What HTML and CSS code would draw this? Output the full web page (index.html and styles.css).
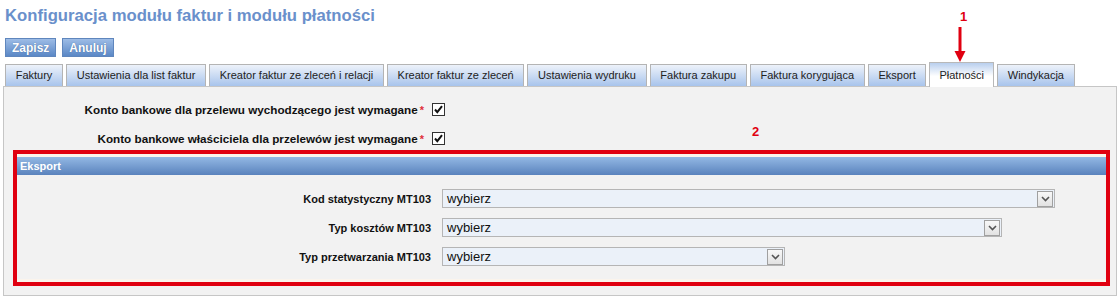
FILE: index.html
```html
<!DOCTYPE html>
<html>
    <head>
        <title>Konfiguracja modułu faktur i modułu płatności</title>
        <link rel="stylesheet" href="styles.css">
    </head>
    <body>
        <p class="title">Konfiguracja modułu faktur i modułu płatności</p>

        <div class="actions">
            <button class="action-button">Zapisz</button>
            <button class="action-button">Anuluj</button>
        </div>

        <div class="tabs">
            <div class="tab">Faktury</div>
            <div class="tab">Ustawienia dla list faktur</div>
            <div class="tab">Kreator faktur ze zleceń i relacji</div>
            <div class="tab">Kreator faktur ze zleceń</div>
            <div class="tab">Ustawienia wydruku</div>
            <div class="tab">Faktura zakupu</div>
            <div class="tab">Faktura korygująca</div>
            <div class="tab">Eksport</div>
            <div class="tab active">Płatności</div>
            <div class="tab">Windykacja</div>
        </div>

        <div class="panel">
            <div class="check-row">
                <span class="check-label">Konto bankowe dla przelewu wychodzącego jest wymagane<span class="req">*</span></span>
                <span class="checkbox">
                    <svg width="11" height="11" viewBox="0 0 11 11"><path d="M2 5.5 L4.3 8.2 L9 2.2" fill="none" stroke="#111" stroke-width="2"/></svg>
                </span>
            </div>
            <div class="check-row">
                <span class="check-label">Konto bankowe właściciela dla przelewów jest wymagane<span class="req">*</span></span>
                <span class="checkbox">
                    <svg width="11" height="11" viewBox="0 0 11 11"><path d="M2 5.5 L4.3 8.2 L9 2.2" fill="none" stroke="#111" stroke-width="2"/></svg>
                </span>
            </div>

            <div class="mark-box">
                <div class="section">
                    <div class="section-head">Eksport</div>
                    <div class="form-row">
                        <span class="form-label">Kod statystyczny MT103</span>
                        <div class="select wide">
                            <span>wybierz</span>
                            <span class="select-arrow"><svg width="9" height="6" viewBox="0 0 9 6"><path d="M1 1 L4.5 4.5 L8 1" fill="none" stroke="#555" stroke-width="1.6"/></svg></span>
                        </div>
                    </div>
                    <div class="form-row">
                        <span class="form-label">Typ kosztów MT103</span>
                        <div class="select medium">
                            <span>wybierz</span>
                            <span class="select-arrow"><svg width="9" height="6" viewBox="0 0 9 6"><path d="M1 1 L4.5 4.5 L8 1" fill="none" stroke="#555" stroke-width="1.6"/></svg></span>
                        </div>
                    </div>
                    <div class="form-row">
                        <span class="form-label">Typ przetwarzania MT103</span>
                        <div class="select narrow">
                            <span>wybierz</span>
                            <span class="select-arrow"><svg width="9" height="6" viewBox="0 0 9 6"><path d="M1 1 L4.5 4.5 L8 1" fill="none" stroke="#555" stroke-width="1.6"/></svg></span>
                        </div>
                    </div>
                </div>
            </div>
        </div>

        <div class="callout callout-1">
            <span class="callout-num">1</span>
            <svg class="callout-arrow" width="12" height="36" viewBox="0 0 12 36"><path d="M6 0 L6 26" stroke="#e00010" stroke-width="3"/><path d="M0.5 24 L6 35 L11.5 24 Z" fill="#e00010"/></svg>
        </div>
        <span class="callout-num callout-2">2</span>
    </body>
</html>
```

FILE: styles.css
```css
body{
    margin: 0;
    background-color: white;
    font-family: "Liberation Sans", Arial, sans-serif;
    color: #111;
    position: relative;
}
.title{
    margin: 6px 0 0 5px;
    font-size: 16.7px;
    font-weight: bold;
    color: #6a90cb;
    line-height: 20px;
}
.actions{
    display: flex;
    gap: 6px;
    margin: 12px 0 0 5px;
}
.action-button{
    height: 19px;
    padding: 0 6px;
    border: 1px solid #5f86bd;
    background: linear-gradient(#9dbce6, #5b88c6);
    color: white;
    font-family: "Liberation Sans", Arial, sans-serif;
    font-size: 12px;
    font-weight: bold;
    text-shadow: 0 0 1px #3a5f94;
}
.tabs{
    display: flex;
    align-items: flex-end;
    gap: 3px;
    margin: 5px 0 0 5px;
    height: 24px;
    position: relative;
    z-index: 1;
}
.tab{
    height: 21px;
    line-height: 21px;
    padding: 0 9.7px;
    border: 1px solid #b4b4b4;
    border-bottom: none;
    background: linear-gradient(#edf2fa, #a8c4ec);
    font-size: 11px;
    color: #222;
}
.tab.active{
    height: 24px;
    line-height: 24px;
    padding: 0 9px;
    background: linear-gradient(#b9cfee, #ffffff 55%);
    margin-bottom: -1px;
    border-color: #b8b8b8;
}
.panel{
    box-sizing: border-box;
    margin-left: 3px;
    height: 210px;
    border: 1px solid #c6c6c6;
    background-color: #f2f2f2;
    padding-top: 14px;
}
.check-row{
    display: flex;
    align-items: center;
    height: 16px;
    margin-bottom: 13px;
}
.check-label{
    width: 420px;
    text-align: right;
    font-size: 11.7px;
    font-weight: bold;
}
.req{
    color: #e0303a;
    margin-left: 2px;
    font-size: 11px;
}
.checkbox{
    margin-left: 8px;
    width: 11px;
    height: 11px;
    border: 1px solid #333;
    background-color: white;
    display: flex;
}
.mark-box{
    margin: -9px 6px 0 9px;
    border: 4px solid #e00010;
    height: 128px;
    background-color: #fbf4ec;
}
.section{
    margin-top: 3px;
    height: 122px;
    background-color: #f2f2f2;
}
.section-head{
    height: 18px;
    line-height: 18px;
    padding-left: 3px;
    background: linear-gradient(#93b8e4, #5a83bd);
    color: white;
    font-size: 11px;
    font-weight: bold;
    margin-bottom: 14px;
}
.form-row{
    display: flex;
    align-items: center;
    height: 19px;
    margin-bottom: 10px;
}
.form-label{
    width: 414px;
    text-align: right;
    font-size: 11px;
    font-weight: bold;
    margin-right: 11px;
}
.select{
    height: 17px;
    border: 1px solid #b5b5b5;
    background-color: #ebf1f9;
    display: flex;
    align-items: center;
    justify-content: space-between;
    padding-left: 4px;
    font-size: 13px;
    color: #111;
}
.select.wide{
    width: 607px;
}
.select.medium{
    width: 554px;
}
.select.narrow{
    width: 337px;
}
.select-arrow{
    width: 14px;
    height: 14px;
    margin-right: 1px;
    border: 1px solid #a0a0a0;
    background: linear-gradient(#f8f8f8, #e2e2e2);
    display: flex;
    align-items: center;
    justify-content: center;
}
.callout{
    position: absolute;
    left: 952px;
    top: 9px;
    display: flex;
    flex-direction: column;
    align-items: center;
    z-index: 2;
}
.callout-num{
    color: #e00010;
    font-size: 13px;
    font-weight: bold;
    line-height: 15px;
    margin-left: 8px;
}
.callout-arrow{
    margin-top: 3px;
}
.callout-2{
    position: absolute;
    left: 744px;
    top: 124px;
}
```
